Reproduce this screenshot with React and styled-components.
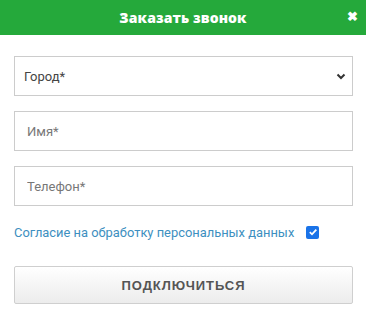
import React from 'react'
import styled, { createGlobalStyle } from 'styled-components'

const GlobalStyle = createGlobalStyle`
    * { box-sizing: border-box; }
    body {
        margin: 0;
        background: #ffffff;
        font-family: Roboto, "Liberation Sans", Arial, sans-serif;
    }
`;

const Modal = styled.div`
    width: 366px;
    height: 311px;
    background: #fff;
    display: flex;
    flex-direction: column;
`;

const Header = styled.div`
    height: 35px;
    background: #25a93b;
    display: flex;
    align-items: center;
    justify-content: center;
    position: relative;
    h2 {
        margin: 0;
        color: #fff;
        font-family: "Open Sans", "Liberation Sans", sans-serif;
        font-weight: 800;
        font-size: 14px;
        letter-spacing: 0.1px;
    }
`;

const Close = styled.span`
    position: absolute;
    right: 8px;
    top: 9px;
    color: #fff;
    font-size: 13px;
    font-weight: 700;
    line-height: 16px;
    cursor: pointer;
`;

const Form = styled.form`
    padding: 21px 13px 0 14px;
    display: flex;
    flex-direction: column;
`;

const fieldBase = `
    width: 339px;
    height: 40px;
    border: 1px solid #cccccc;
    background: #fff;
    font-family: Roboto, "Liberation Sans", Arial, sans-serif;
    font-size: 13px;
    color: #555;
    outline: none;
    margin-bottom: 15px;
`;

const Select = styled.div`
    ${fieldBase}
    display: flex;
    align-items: center;
    justify-content: space-between;
    padding: 0 5px 0 9px;
    color: #444;
    svg { display: block; }
`;

const Input = styled.input`
    ${fieldBase}
    padding: 0 12px;
    &::placeholder { color: #777; opacity: 1; }
`;

const Consent = styled.label`
    display: flex;
    align-items: center;
    gap: 12px;
    margin-top: 2px;
    font-size: 12.9px;
    color: #3d8fc0;
    height: 18px;
`;

const Check = styled.span`
    width: 13px;
    height: 13px;
    border-radius: 2px;
    background: #1a73e8;
    display: flex;
    align-items: center;
    justify-content: center;
`;

const Button = styled.button`
    margin-top: 25px;
    width: 339px;
    height: 38px;
    border: 1px solid #cfcfcf;
    border-radius: 2px;
    background: linear-gradient(#ffffff, #ececec);
    font-family: "Liberation Sans", Arial, sans-serif;
    font-weight: 700;
    font-size: 13px;
    letter-spacing: 0.9px;
    color: #555;
    cursor: pointer;
`;

export default function App() {
    return (
        <>
            <GlobalStyle />
            <Modal>
                <Header>
                    <h2>Заказать звонок</h2>
                    <Close>✖</Close>
                </Header>
                <Form>
                    <Select>
                        <span>Город*</span>
                        <svg width="12" height="12" viewBox="0 0 12 12">
                            <path d="M2.5 4.5 L6 8 L9.5 4.5" fill="none" stroke="#333" strokeWidth="2" />
                        </svg>
                    </Select>
                    <Input placeholder="Имя*" />
                    <Input placeholder="Телефон*" />
                    <Consent>
                        Согласие на обработку персональных данных
                        <Check>
                            <svg width="10" height="10" viewBox="0 0 10 10">
                                <path d="M1.8 5.2 L4 7.3 L8.3 2.6" fill="none" stroke="#fff" strokeWidth="1.8" />
                            </svg>
                        </Check>
                    </Consent>
                    <Button type="button">ПОДКЛЮЧИТЬСЯ</Button>
                </Form>
            </Modal>
        </>
    )
}
